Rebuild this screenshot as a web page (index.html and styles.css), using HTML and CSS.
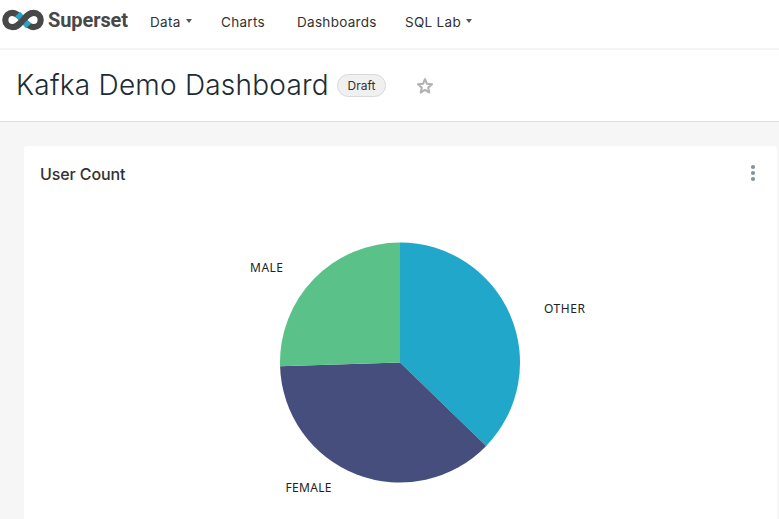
FILE: index.html
```html
<!DOCTYPE html>
<html lang="en">
<head>
<meta charset="utf-8">
<title>Kafka Demo Dashboard</title>
<link rel="stylesheet" href="styles.css">
</head>
<body>
<nav class="navbar">
  <a class="brand">
    <svg class="brand-mark" width="42" height="22" viewBox="0 0 42 22" fill="none" stroke-width="6.2">
      <path d="M21 11C17.500 7 14.500 3.900 10.400 3.900a7.100 7.100 0 0 0 0 14.200C14.500 18.100 17.500 15 21 11S27.500 3.900 31.600 3.900a7.100 7.100 0 0 1 0 14.200C27.500 18.100 24.500 15 21 11" stroke="#484848"/>
      <path d="M15.700 5 26.500 17" stroke="#20a7c9" stroke-width="6.800"/>
      <path d="M11.500 18C17 17.800 19 12.800 21 11S25.500 4.200 30.500 4" stroke="#484848"/>
    </svg>
    <span class="brand-name">Superset</span>
  </a>
  <a class="nav-link data">Data<i class="caret"></i></a>
  <a class="nav-link charts">Charts</a>
  <a class="nav-link boards">Dashboards</a>
  <a class="nav-link">SQL Lab<i class="caret"></i></a>
</nav>
<header class="dash-header">
  <h1>Kafka Demo Dashboard</h1>
  <span class="tag">Draft</span>
  <svg class="star" width="18" height="18" viewBox="0 0 18 18" fill="none" stroke="#b2b2b2" stroke-width="2.1" stroke-linejoin="round">
    <path d="M9 2.200 11 6.800 16 7.300 12.200 10.600 13.300 15.500 9 12.900 4.700 15.500 5.800 10.600 2 7.300 7 6.800Z"/>
  </svg>
</header>
<main class="board">
  <section class="card">
    <div class="card-head">
      <h2>User Count</h2>
      <svg class="dots" width="6" height="18" viewBox="0 0 6 18" fill="#879399"><circle cx="3" cy="3" r="2.100"/><circle cx="3" cy="9" r="2.100"/><circle cx="3" cy="15" r="2.100"/></svg>
    </div>
    <svg class="chart" width="753" height="317" viewBox="24 202 753 317">
      <path fill="#20a7c9" d="M400 362.500V242.500A120 120 0 0 1 486.200 446Z"/>
      <path fill="#454e7c" d="M400 362.500 486.200 446A120 120 0 0 1 280.050 366.300Z"/>
      <path fill="#5ac189" d="M400 362.500 280.050 366.300A120 120 0 0 1 400 242.500Z"/>
      <text x="250" y="272" textLength="33">MALE</text>
      <text x="544" y="313" textLength="41">OTHER</text>
      <text x="285.500" y="492" textLength="46">FEMALE</text>
    </svg>
  </section>
</main>
</body>
</html>
```
FILE: styles.css
```css
* { box-sizing: border-box; }
body { margin: 0; height: 519px; overflow: hidden; background: #fff; font-family: Inter, "Liberation Sans", sans-serif; color: #323232; display: flex; flex-direction: column; }
.navbar { height: 50px; flex: none; display: flex; align-items: center; padding: 0 0 4px 2px; border-bottom: 2px solid #f5f5f5; }
.brand { display: flex; align-items: center; width: 148px; margin-top: -5px; gap: 4px; }
.brand-name { font: 700 20px/24px Roboto, sans-serif; color: #484848; letter-spacing: -.1px; }
.nav-link { display: flex; align-items: center; font-size: 13.500px; line-height: 20px; letter-spacing: .3px; }
.nav-link.data { width: 71px; }
.nav-link.charts { width: 76px; }
.nav-link.boards { width: 108px; }
.caret { margin: -2px 0 0 5px; border: 3px solid transparent; border-top: 4px solid #555; border-bottom: 0; }
.dash-header { height: 72px; flex: none; display: flex; align-items: center; padding-left: 16px; border-bottom: 1px solid #dedede; }
h1 { margin: -2px 0 0; width: 321px; font-size: 28px; line-height: 36px; font-weight: 300; color: #1c2b33; letter-spacing: .22px; white-space: nowrap; }
.tag { width: 49px; height: 23px; border: 1px solid #d9d9d9; border-radius: 12px; background: #f0f0f0; font-size: 12px; line-height: 21px; text-align: center; }
.star { margin-left: 30px; }
.board { flex: 1; background: #f6f6f6; padding: 24px 2px 0 24px; }
.card { height: 373px; background: #fff; border-radius: 3px 3px 0 0; }
.card-head { height: 56px; display: flex; justify-content: space-between; align-items: center; padding: 0 21px 2px 16px; }
h2 { margin: 2px 0 0; font-size: 16px; font-weight: 500; line-height: 20px; letter-spacing: -.1px; }
.chart { display: block; }
.chart text { font: 12px "Noto Sans", sans-serif; fill: #222; }
```
